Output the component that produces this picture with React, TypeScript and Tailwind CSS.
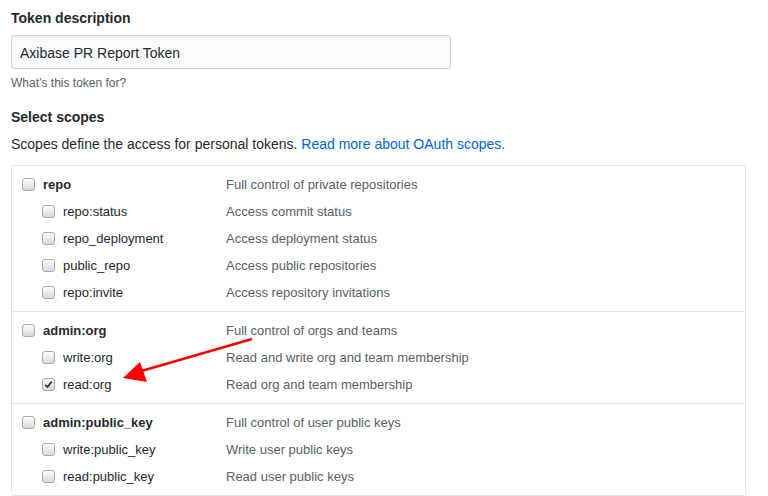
import React from "react";

type Row = { name: string; desc: string; sub?: boolean; checked?: boolean };

const groups: Row[][] = [
  [
    { name: "repo", desc: "Full control of private repositories" },
    { name: "repo:status", desc: "Access commit status", sub: true },
    { name: "repo_deployment", desc: "Access deployment status", sub: true },
    { name: "public_repo", desc: "Access public repositories", sub: true },
    { name: "repo:invite", desc: "Access repository invitations", sub: true },
  ],
  [
    { name: "admin:org", desc: "Full control of orgs and teams" },
    { name: "write:org", desc: "Read and write org and team membership", sub: true },
    { name: "read:org", desc: "Read org and team membership", sub: true, checked: true },
  ],
  [
    { name: "admin:public_key", desc: "Full control of user public keys" },
    { name: "write:public_key", desc: "Write user public keys", sub: true },
    { name: "read:public_key", desc: "Read user public keys", sub: true },
  ],
];

function Checkbox({ checked }: { checked?: boolean }) {
  return (
    <div className="w-[13px] h-[13px] rounded-[3px] border border-[#a9a9a9] bg-gradient-to-b from-[#fdfdfd] to-[#d8d8d8] flex items-center justify-center shrink-0">
      {checked && (
        <svg width="9" height="9" viewBox="0 0 9 9">
          <path d="M1.2 4.8 L3.5 7 L7.8 1.5" fill="none" stroke="#333" strokeWidth="1.8" />
        </svg>
      )}
    </div>
  );
}

export default function App() {
  return (
    <div
      className="w-[768px] h-[496px] bg-white overflow-hidden relative pl-[11px] pt-[8px]"
      style={{ fontFamily: '"Liberation Sans", Arial, sans-serif' }}
    >
      <div className="h-[21px] leading-[21px] text-[14px] font-bold text-[#24292e]">Token description</div>
      <div className="mt-[6px] w-[440px] h-[34px] rounded-[3px] border border-[#d1d5da] bg-[#fafbfc] flex items-center pl-[8px] pt-[2px] text-[14px] text-[#24292e] shadow-[inset_0_1px_2px_rgba(27,31,35,0.075)]">
        Axibase PR Report Token
      </div>
      <div className="mt-[5px] h-[18px] leading-[18px] text-[12px] text-[#586069]">What’s this token for?</div>
      <div className="mt-[15px] h-[21px] leading-[21px] text-[14px] font-bold text-[#24292e]">Select scopes</div>
      <div className="mt-[6px] h-[21px] leading-[21px] text-[14px] text-[#24292e]">
        Scopes define the access for personal tokens.{" "}
        <span className="text-[#0366d6]">Read more about OAuth scopes.</span>
      </div>
      <div className="mt-[10px] w-[735px] border border-[#e1e4e8] rounded-[3px]">
        {groups.map((g, gi) => (
          <div key={gi} className={`py-[5px] ${gi > 0 ? "border-t border-[#e1e4e8]" : ""}`}>
            {g.map((r) => (
              <div key={r.name} className="h-[27px] flex items-center text-[13px]">
                <div className={`flex items-center ${r.sub ? "pl-[30px] w-[214px]" : "pl-[10px] w-[214px]"}`}>
                  <Checkbox checked={r.checked} />
                  <span
                    className={`ml-[8px] ${r.sub ? "text-[#24292e]" : "font-bold text-[#24292e]"}`}
                  >
                    {r.name}
                  </span>
                </div>
                <span className="text-[#586069]">{r.desc}</span>
              </div>
            ))}
          </div>
        ))}
      </div>
      <svg className="absolute left-0 top-0 pointer-events-none" width="768" height="496">
        <line x1="252" y1="339" x2="138" y2="372" stroke="#f00" strokeWidth="2.5" />
        <polygon points="123,378 140,362 147,382" fill="#f00" />
      </svg>
    </div>
  );
}
